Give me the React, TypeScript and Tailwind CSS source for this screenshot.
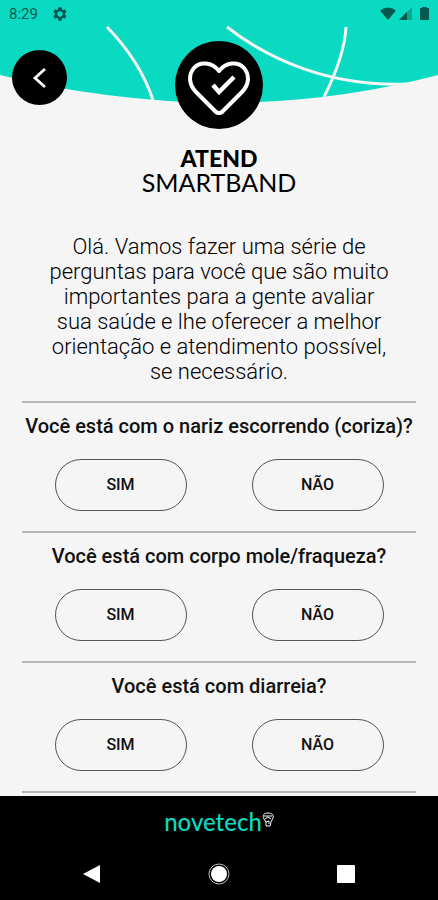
import { useState } from 'react';

const QUESTIONS = [
  'Você está com o nariz escorrendo (coriza)?',
  'Você está com corpo mole/fraqueza?',
  'Você está com diarreia?',
];

function StatusBar() {
  return (
    <div className="relative flex h-7 items-center justify-between pl-[9px] pr-2 text-[#07594f]">
      <div className="flex items-center gap-3.5">
        <span className="text-[15px]">8:29</span>
        <svg viewBox="0 0 24 24" className="size-4" fill="currentColor">
          <path
            fillRule="evenodd"
            d="M19.4 13a7.500 7.500 0 0 0 0-2l2.100-1.600a.5.500 0 0 0 .1-.6l-2-3.500a.5.500 0 0 0-.6-.2l-2.500 1a7.300 7.300 0 0 0-1.700-1l-.4-2.600a.5.500 0 0 0-.5-.5h-4a.5.500 0 0 0-.5.500L9 5.100a7.300 7.300 0 0 0-1.700 1l-2.500-1a.5.500 0 0 0-.6.200l-2 3.500a.5.500 0 0 0 .1.600L4.500 11a7.500 7.500 0 0 0 0 2l-2.200 1.600a.5.500 0 0 0-.1.600l2 3.500c.1.200.4.300.6.200l2.500-1a7.300 7.300 0 0 0 1.700 1l.4 2.600c0 .3.200.5.500.5h4c.3 0 .5-.2.500-.5l.4-2.600a7.300 7.300 0 0 0 1.700-1l2.500 1c.2.100.5 0 .6-.2l2-3.500a.5.500 0 0 0-.1-.6zM12 16a4 4 0 1 1 0-8 4 4 0 0 1 0 8z"
          />
        </svg>
      </div>
      <svg viewBox="0 0 50 16" className="h-4 w-[50px]" fill="currentColor">
        <path d="M0 4.500Q8 -1.500 16 4.500L8 14z" />
        <path d="M32 1V14H19z" opacity=".4" />
        <path d="M27 6V14H19z" />
        <path d="M40 3q0-1 1-1h1V1h5v1h1q1 0 1 1v10q0 1-1 1h-7q-1 0-1-1z" />
      </svg>
    </div>
  );
}

function Header() {
  return (
    <header className="relative">
      <svg
        viewBox="0 0 438 104"
        preserveAspectRatio="none"
        className="absolute inset-x-0 top-0 h-[104px] w-full"
      >
        <path d="M0 0H438V75Q332 103 219 103Q104 101 0 75z" fill="#0bdac2" />
        <g fill="none" stroke="#f5f5f5" strokeWidth="3">
          <path d="M107 27Q140 61 153 100" />
          <path d="M227 27C268 59 329 87 407 84" />
          <path d="M346 27C345 48 336 73 324 97" />
        </g>
      </svg>
      <StatusBar />
      <div className="relative grid grid-cols-[1fr_88px_1fr] pt-3">
        <button
          type="button"
          aria-label="Voltar"
          className="ml-3 mt-2.5 flex size-[55px] items-center justify-center rounded-full bg-black text-white"
        >
          <svg viewBox="0 0 24 24" className="size-6" fill="none" stroke="currentColor" strokeWidth="2.800">
            <path d="M17 3L7 12L17 21" />
          </svg>
        </button>
        <div className="mt-px flex size-[88px] items-center justify-center rounded-full bg-black pt-1.5">
          <svg
            viewBox="0 0 62 54"
            className="h-[54px] w-[62px]"
            fill="none"
            stroke="white"
            strokeWidth="4"
            strokeLinecap="round"
            strokeLinejoin="round"
          >
            <path d="M31 10C24 1 12 0 6 7C0 14 1 24 8 31L28 51Q31 53 34 51L54 31C61 24 62 14 56 7C50 0 38 1 31 10z" />
            <path
              d="M25 24L31 31L46 16"
              strokeWidth="4.500"
              strokeLinecap="butt"
              strokeLinejoin="miter"
            />
          </svg>
        </div>
      </div>
      <h1 className="mt-[17px] text-center font-['Lato',sans-serif] text-black">
        <span className="block text-[23px] leading-6 font-black">ATEND</span>
        <span className="block text-[25px] leading-6">SMARTBAND</span>
      </h1>
    </header>
  );
}

interface QuestionProps {
  text: string;
  index: number;
}

function Question({ text, index }: QuestionProps) {
  const [answer, setAnswer] = useState<string | null>(null);

  return (
    <section
      aria-labelledby={`question-${index}`}
      className="border-t-2 border-[#b5b5b5] pb-5 pt-[11px]"
    >
      <h2 id={`question-${index}`} className="text-center text-xl font-medium leading-[25px]">
        {text}
      </h2>
      <div className="mt-5 grid grid-cols-2 justify-items-center">
        {['SIM', 'NÃO'].map((option) => (
          <button
            key={option}
            type="button"
            aria-pressed={answer === option}
            onClick={() => setAnswer(option)}
            className="h-[52px] w-[132px] rounded-full border border-[#555] text-base font-medium aria-pressed:bg-[#0bdac2]"
          >
            {option}
          </button>
        ))}
      </div>
    </section>
  );
}

function Footer() {
  return (
    <footer className="bg-black">
      <div className="flex h-[52px] items-center justify-center text-[#0bdac2]">
        <span className="font-['Lato',sans-serif] text-2xl font-medium leading-6">novetech</span>
        <svg viewBox="0 0 12 16" className="mb-1 h-4 w-3" fill="none" stroke="white" strokeLinejoin="round">
          <path d="M2 7C0 3 2 1 6 1C10 1 12 3 11 6L9 10L8 14H4L4 10L2 7z" />
          <path d="M2 4H10M3 7L6 5L9 7M4 10L7 9L7 12" />
        </svg>
      </div>
      <nav className="grid h-[52px] grid-cols-3 items-center justify-items-center px-7 text-white">
        <button type="button" aria-label="Voltar">
          <svg viewBox="0 0 20 20" className="size-5" fill="currentColor">
            <path d="M18 1V19L1 10z" />
          </svg>
        </button>
        <button type="button" aria-label="Início">
          <svg viewBox="0 0 22 22" className="size-[22px]">
            <circle cx="11" cy="11" r="10" fill="none" stroke="#bbb" />
            <circle cx="11" cy="11" r="8" fill="currentColor" />
          </svg>
        </button>
        <button type="button" aria-label="Recentes">
          <svg viewBox="0 0 18 18" className="size-[18px]" fill="currentColor">
            <rect width="18" height="18" rx="1" />
          </svg>
        </button>
      </nav>
    </footer>
  );
}

export default function App() {
  return (
    <div className="flex h-screen flex-col bg-[#f5f5f5] font-['Roboto',sans-serif] text-[#111]">
      <main className="min-h-0 flex-1 overflow-hidden">
        <Header />
        <p className="mx-auto mt-10 max-w-[345px] text-center text-[22px] font-light leading-[25px] text-black">
          Olá. Vamos fazer uma série de perguntas para você que são muito importantes para a gente avaliar
          sua saúde e lhe oferecer a melhor orientação e atendimento possível, se necessário.
        </p>
        <div className="mx-[22px] mt-[17px] border-b-2 border-[#b5b5b5]">
          {QUESTIONS.map((text, i) => (
            <Question key={text} text={text} index={i} />
          ))}
        </div>
      </main>
      <Footer />
    </div>
  );
}
